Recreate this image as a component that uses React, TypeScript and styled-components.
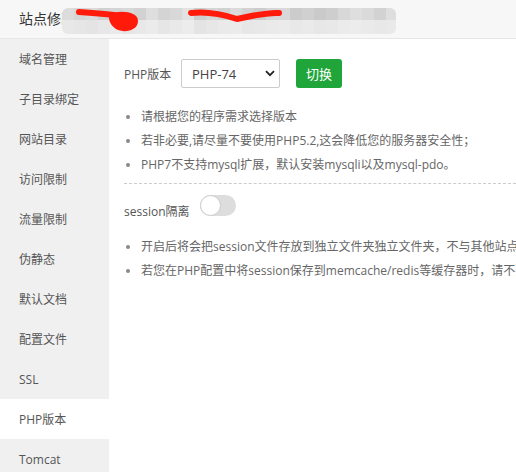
import React from "react";
import styled, { createGlobalStyle } from "styled-components";

const Global = createGlobalStyle`
  html, body { margin: 0; padding: 0; background: #fff; overflow: hidden; }
  body { font-family: "Open Sans", "Noto Sans CJK SC", sans-serif; }
  * { box-sizing: border-box; }
`;

const Page = styled.div`
  width: 516px;
  height: 472px;
  display: flex;
  flex-direction: column;
  overflow: hidden;
`;

const Header = styled.div`
  height: 39px;
  flex: none;
  background: #f7f7f7;
  border-bottom: 1px solid #e6e6e6;
  display: flex;
  align-items: center;
  padding-left: 19px;
  position: relative;
`;

const Title = styled.span`
  font-size: 14px;
  color: #333;
  line-height: 20px;
`;

const Redact = styled.svg`
  position: absolute;
  left: 62px;
  top: 8px;
`;

const Body = styled.div`
  flex: 1;
  display: flex;
  min-height: 0;
`;

const Sidebar = styled.div`
  width: 109px;
  flex: none;
  background: #f0f0f0;
  display: flex;
  flex-direction: column;
`;

const NavItem = styled.div<{ $active?: boolean }>`
  height: 40px;
  flex: none;
  display: flex;
  align-items: center;
  padding-left: 19px;
  font-size: 12px;
  color: #555;
  background: ${(p) => (p.$active ? "#fff" : "transparent")};
  white-space: nowrap;
`;

const Main = styled.div`
  flex: 1;
  padding: 20px 0 0 15px;
  white-space: nowrap;
  overflow: hidden;
`;

const Row = styled.div`
  display: flex;
  align-items: center;
  height: 29px;
`;

const Label = styled.span`
  font-size: 12px;
  color: #555;
  width: 57px;
`;

const Select = styled.div`
  width: 99px;
  height: 29px;
  border: 1px solid #ccc;
  border-radius: 2px;
  display: flex;
  align-items: center;
  justify-content: space-between;
  padding: 0 4px 0 10px;
  font-size: 13px;
  color: #444;
`;

const Button = styled.div`
  margin-left: 16px;
  width: 46px;
  height: 29px;
  border-radius: 3px;
  background: #20a53a;
  color: #fff;
  font-size: 13px;
  display: flex;
  align-items: center;
  justify-content: center;
`;

const List = styled.ul<{ $top: number }>`
  list-style: none;
  margin: ${(p) => p.$top}px 0 0 0;
  padding: 0;
`;

const Item = styled.li`
  position: relative;
  height: 24px;
  line-height: 24px;
  padding-left: 17px;
  font-size: 12px;
  color: #666;
  &::before {
    content: "";
    position: absolute;
    left: 2px;
    top: 10px;
    width: 4px;
    height: 4px;
    border-radius: 50%;
    background: #888;
  }
`;

const Divider = styled.div`
  margin-top: 6px;
  border-top: 1px dashed #ccc;
`;

const SessionRow = styled.div`
  display: flex;
  align-items: flex-start;
  margin-top: 11px;
`;

const SessionLabel = styled.span`
  font-size: 12px;
  line-height: 16px;
  color: #555;
  padding-top: 9px;
  width: 76px;
`;

const Toggle = styled.div`
  width: 36px;
  height: 21px;
  border-radius: 11px;
  background: #ddd;
  position: relative;
`;

const Knob = styled.div`
  position: absolute;
  left: 0;
  top: 0;
  width: 21px;
  height: 21px;
  border-radius: 50%;
  background: #fff;
  border: 1px solid #ccc;
`;

const navItems = [
  "域名管理",
  "子目录绑定",
  "网站目录",
  "访问限制",
  "流量限制",
  "伪静态",
  "默认文档",
  "配置文件",
  "SSL",
  "PHP版本",
  "Tomcat",
];

const topShades = ["#dcdcdc", "#d6d6d6", "#dadada", "#d0d0d0", "#d4d4d4", "#d8d8d8", "#d2d2d2", "#dedede", "#d4d4d4", "#d8d8d8", "#e2e2e2", "#cecece", "#d5d5d5", "#d1d1d1", "#dadada", "#d2d2d2", "#cccccc", "#d6d6d6", "#d8d8d8", "#cccccc", "#d0d0d0", "#cacaca", "#cecece", "#d8d8d8", "#dedede", "#dadada", "#d2d2d2", "#dedede"];
const botShades = ["#e8e8e8", "#e6e6e6", "#e4e4e4", "#e7e7e7", "#eaeaea", "#e5e5e5", "#e8e8e8", "#ebebeb", "#e6e6e6", "#e9e9e9", "#ececec", "#e4e4e4", "#e7e7e7", "#eaeaea", "#ebebeb", "#e7e7e7", "#e8e8e8", "#eaeaea", "#ebebeb", "#e8e8e8", "#eaeaea", "#e7e7e7", "#e8e8e8", "#ebebeb", "#ececec", "#eaeaea", "#e8e8e8", "#e9e9e9"];

function RedactBlock() {
  const cell = 12;
  const n = 28;
  return (
    <Redact width={334} height={26} viewBox="0 0 334 26">
      <defs>
        <clipPath id="rc">
          <rect x={0} y={0} width={334} height={26} rx={6} />
        </clipPath>
      </defs>
      <g clipPath="url(#rc)">
        {Array.from({ length: n }).map((_, i) => (
          <rect key={"t" + i} x={i * cell} y={0} width={cell} height={12} fill={topShades[i]} />
        ))}
        {Array.from({ length: n }).map((_, i) => (
          <rect key={"b" + i} x={i * cell} y={12} width={cell} height={14} fill={botShades[i]} />
        ))}
      </g>
      <path d="M17 4 C30 5 42 6 52 7" stroke="#ff1a0a" strokeWidth={6} strokeLinecap="round" fill="none" />
      <path d="M47 6 C58 2 76 3 76 13 C76 22 64 25 56 22 C49 19 46 12 47 6 Z" fill="#ff1a0a" />
      <path d="M129 5 C146 3 160 6 175 11 C190 8 205 4 217 5" stroke="#ff1a0a" strokeWidth={6} strokeLinecap="round" fill="none" />
    </Redact>
  );
}

export default function App() {
  return (
    <Page>
      <Global />
      <Header>
        <Title>站点修改</Title>
        <RedactBlock />
      </Header>
      <Body>
        <Sidebar>
          {navItems.map((n) => (
            <NavItem key={n} $active={n === "PHP版本"}>
              {n}
            </NavItem>
          ))}
        </Sidebar>
        <Main>
          <Row>
            <Label>PHP版本</Label>
            <Select>
              <span>PHP-74</span>
              <svg width="10" height="7" viewBox="0 0 10 7">
                <path d="M1 1.2 L5 5.2 L9 1.2" stroke="#222" strokeWidth="1.8" fill="none" />
              </svg>
            </Select>
            <Button>切换</Button>
          </Row>
          <List $top={17}>
            <Item>请根据您的程序需求选择版本</Item>
            <Item>若非必要,请尽量不要使用PHP5.2,这会降低您的服务器安全性；</Item>
            <Item>PHP7不支持mysql扩展，默认安装mysqli以及mysql-pdo。</Item>
          </List>
          <Divider />
          <SessionRow>
            <SessionLabel>session隔离</SessionLabel>
            <Toggle>
              <Knob />
            </Toggle>
          </SessionRow>
          <List $top={15}>
            <Item>开启后将会把session文件存放到独立文件夹独立文件夹，不与其他站点公用存储位置</Item>
            <Item>若您在PHP配置中将session保存到memcache/redis等缓存器时，请不要开启此选项</Item>
          </List>
        </Main>
      </Body>
    </Page>
  );
}
